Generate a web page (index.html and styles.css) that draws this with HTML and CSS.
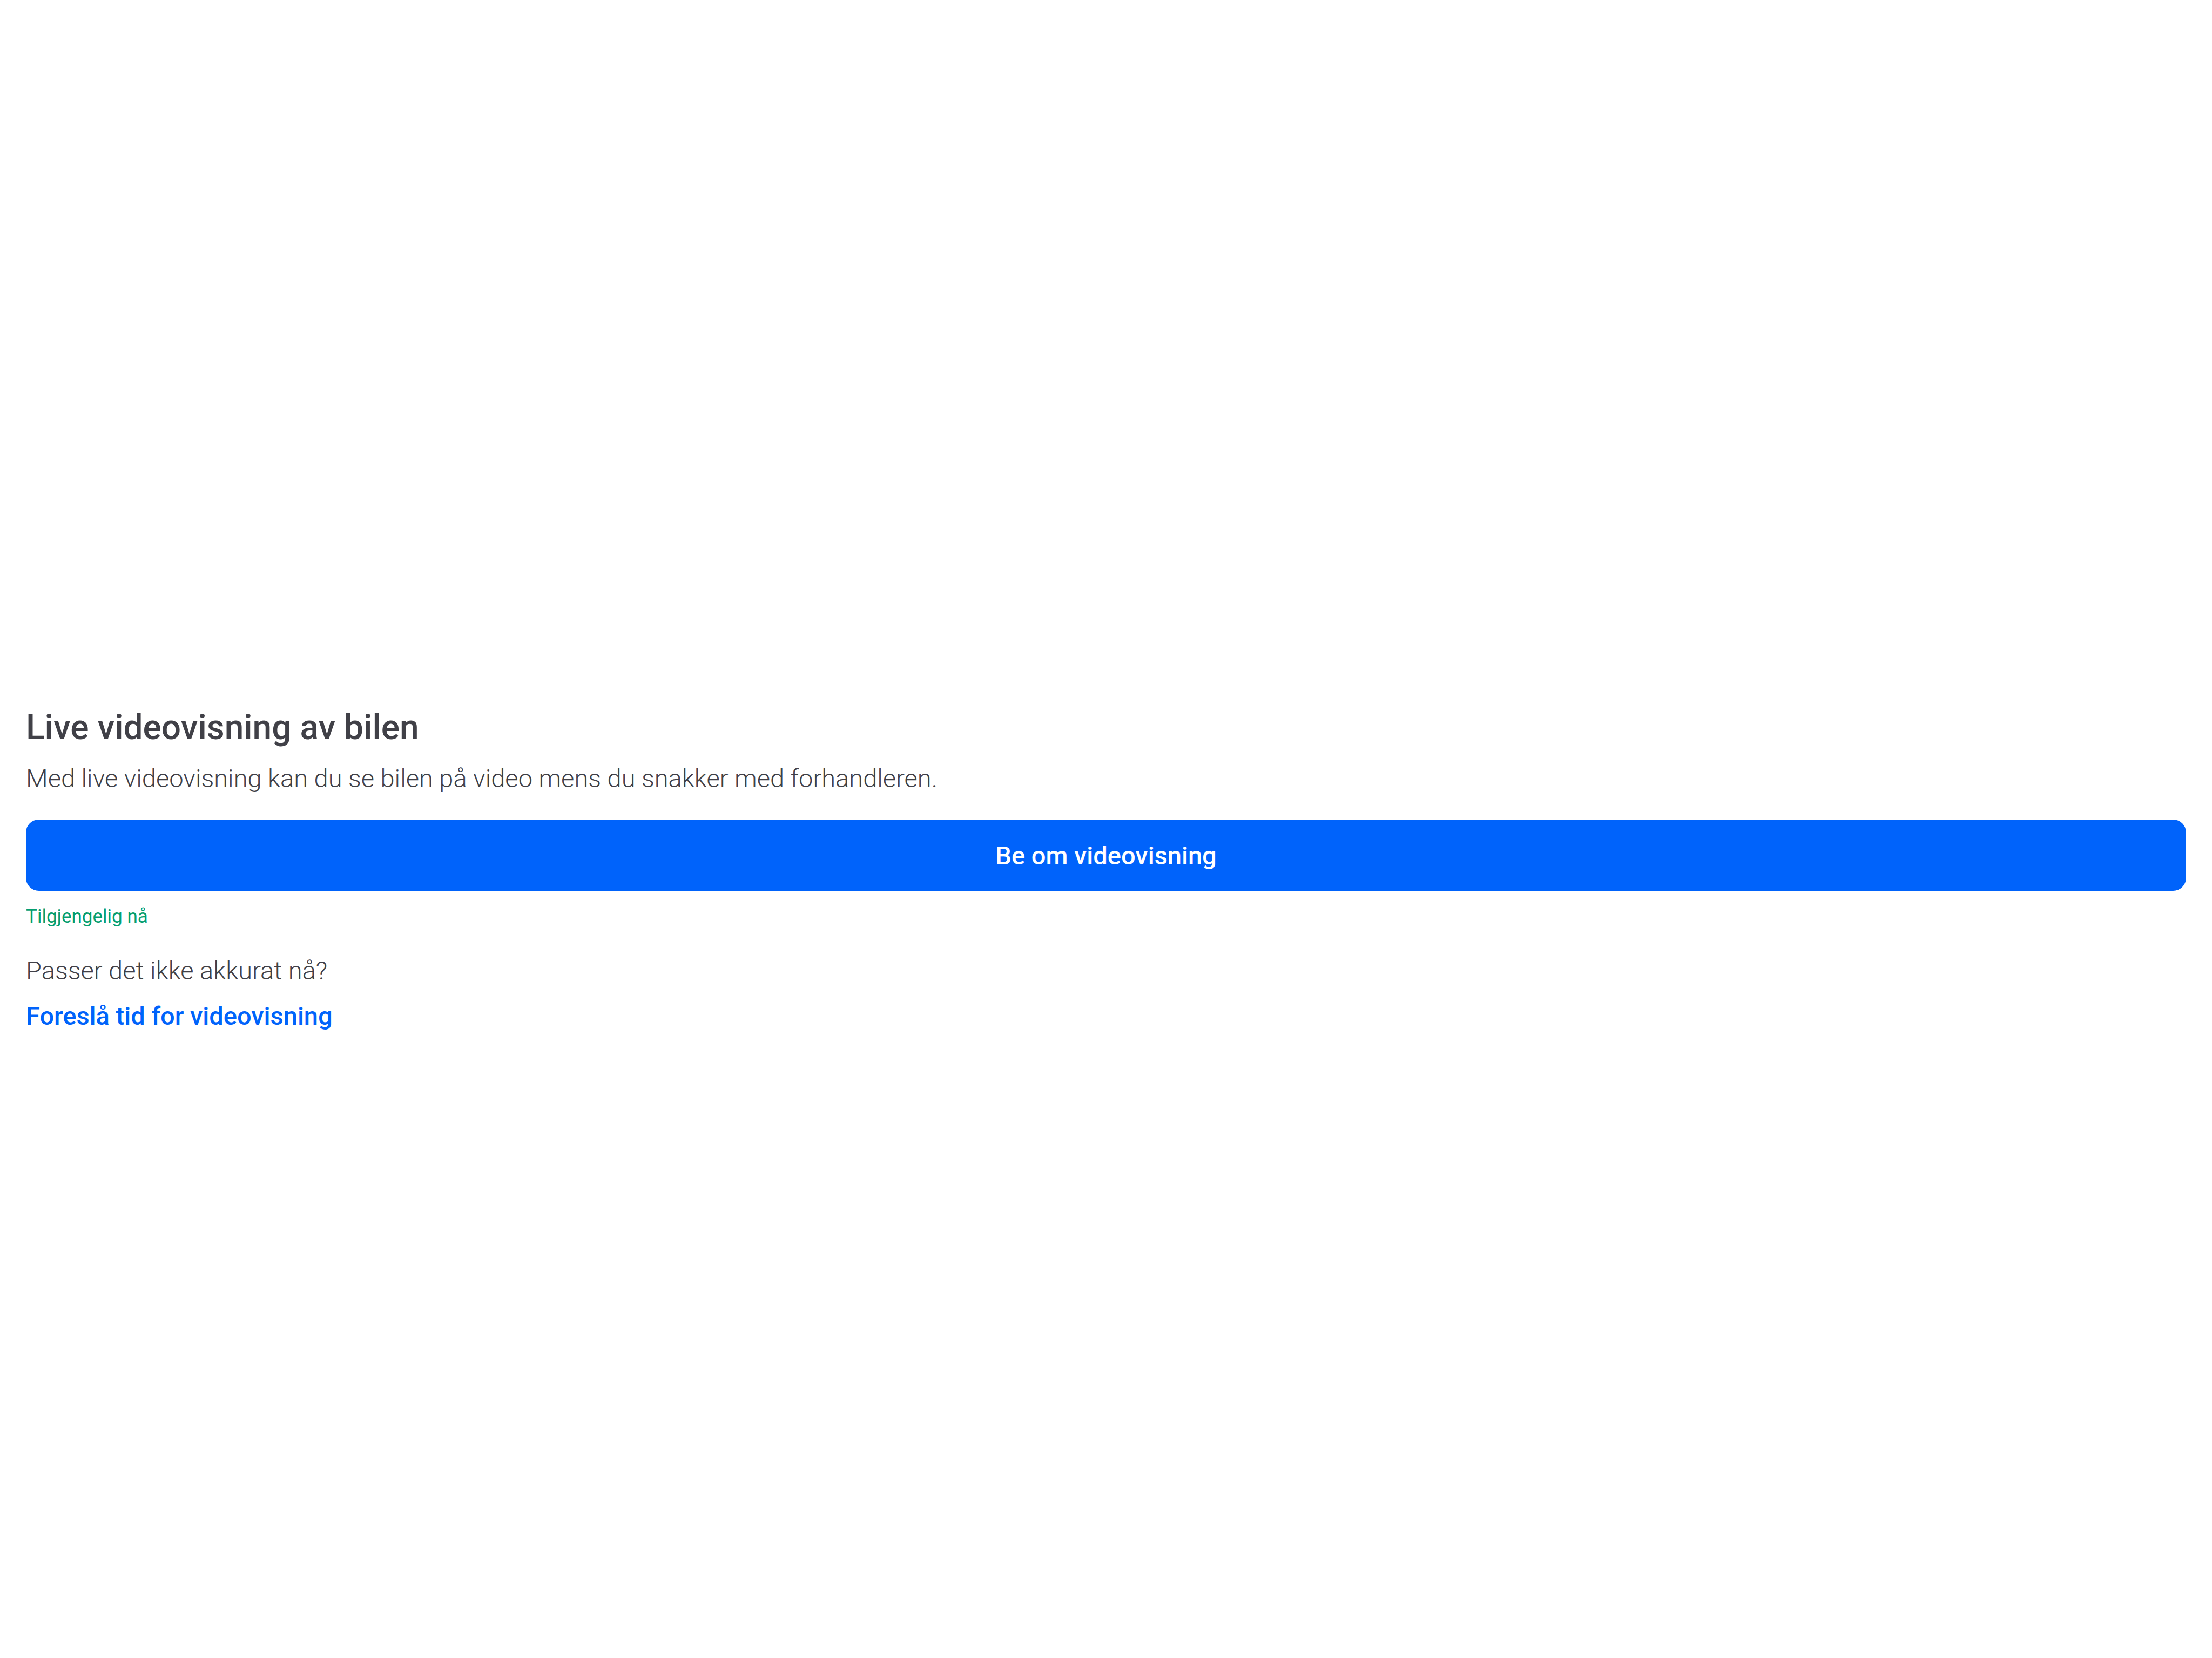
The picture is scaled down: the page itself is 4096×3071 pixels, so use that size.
FILE: index.html
```html
<!DOCTYPE html>
<html lang="no">
<head>
<meta charset="utf-8">
<meta name="viewport" content="width=device-width, initial-scale=1">
<title>Live videovisning av bilen</title>
<link rel="stylesheet" href="styles.css">
</head>
<body>
<main class="panel">
  <h1 class="title">Live videovisning av bilen</h1>
  <p class="text">Med live videovisning kan du se bilen på video mens du snakker med forhandleren.</p>
  <button class="button" type="button">Be om videovisning</button>
  <p class="status">Tilgjengelig nå</p>
  <p class="text">Passer det ikke akkurat nå?</p>
  <a class="link" href="#">Foreslå tid for videovisning</a>
</main>
</body>
</html>
```

FILE: styles.css
```css
* {
  box-sizing: border-box;
}

body {
  margin: 0;
  min-height: 100vh;
  display: flex;
  flex-direction: column;
  justify-content: center;
  background: #fff;
  color: #404047;
  font-family: Roboto, "Liberation Sans", sans-serif;
}

.panel {
  padding: 201px 48px 48px;
}

.title,
.text,
.status {
  margin: 0;
}

.title {
  margin-bottom: 16px;
  font-size: 64px;
  font-weight: 500;
  line-height: 84px;
}

.text {
  font-size: 47px;
  font-weight: 300;
  line-height: 72px;
}

.button {
  display: block;
  width: 100%;
  height: 132px;
  margin: 40px 0 24px;
  border: 0;
  border-radius: 24px;
  background: #0063fb;
  color: #fff;
  font: inherit;
  font-size: 47px;
  font-weight: 500;
}

.status {
  margin-bottom: 40px;
  color: #059e6f;
  font-size: 35px;
  line-height: 48px;
}

.link {
  display: block;
  width: fit-content;
  margin-top: 12px;
  color: #0063fb;
  font-size: 47px;
  font-weight: 500;
  line-height: 72px;
  text-decoration: none;
}
```
